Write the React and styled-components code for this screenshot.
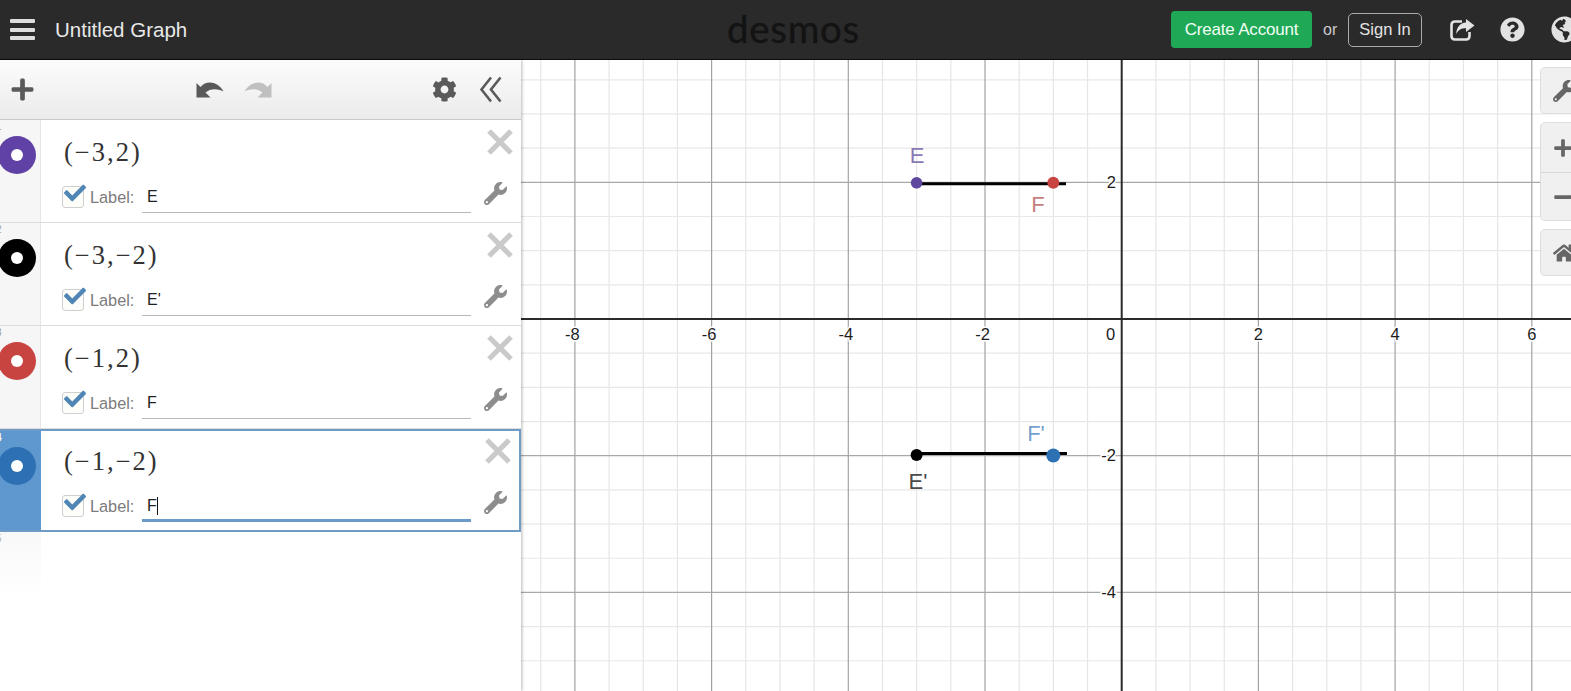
import React from "react";
import styled, { createGlobalStyle } from "styled-components";
import { FaCog, FaWrench, FaHome, FaPlus, FaMinus, FaQuestionCircle, FaGlobeAmericas, FaCheck } from "react-icons/fa";

const Global = createGlobalStyle`
  html, body { margin: 0; padding: 0; background: #fff; overflow: hidden; }
  * { box-sizing: border-box; }
  body { font-family: "Liberation Sans", Arial, sans-serif; }
`;

const Page = styled.div`
  width: 1571px; height: 691px; display: flex; flex-direction: column; overflow: hidden;
`;
const Header = styled.header`
  height: 60px; flex: none; display: flex; align-items: center; background: #2a2a2a;
  border-bottom: 1px solid #0c0c0c; color: #eee; overflow: hidden; padding-left: 10px;
`;
const Burger = styled.div`
  width: 25px; height: 21px; display: flex; flex-direction: column; justify-content: space-between; flex: none;
`;
const BurgerBar = styled.span`
  height: 4px; background: #ddd; border-radius: 1px;
`;
const Title = styled.div`
  margin-left: 20px; width: 672px; flex: none; font-size: 20.5px; color: #e8e8e8;
`;
const Logo = styled.div`
  width: 444px; flex: none; font-family: Lato, sans-serif; font-size: 38.5px; line-height: 54px; height: 58px; color: #131313; letter-spacing: 0.7px;
  -webkit-text-stroke: 0.4px #131313;
`;
const CreateButton = styled.div`
  width: 141px; height: 37px; flex: none; background: #1fa855; border-radius: 4px; color: #f2fff6;
  font-size: 17px; display: flex; align-items: center; justify-content: center; letter-spacing: -0.2px;
`;
const OrText = styled.span`
  margin-left: 11px; width: 25px; flex: none; font-size: 16px; color: #ccc;
`;
const SignIn = styled.div`
  width: 74px; height: 34px; flex: none; border: 1px solid #aaa; border-radius: 5px; color: #e4e4e4;
  font-size: 16.5px; display: flex; align-items: center; justify-content: center;
`;
const HeadIcon = styled.div`
  flex: none; margin-left: ${(p) => p.$gap}px; display: flex; color: #e2e2e2; font-size: ${(p) => p.$size}px;
`;
const Main = styled.div`
  flex: 1; display: flex; min-height: 0;
`;
const Sidebar = styled.aside`
  width: 521px; flex: none; display: flex; flex-direction: column; background: #fff;
  box-shadow: 1px 0 3px rgba(0,0,0,.28); position: relative; z-index: 2;
`;
const Toolbar = styled.div`
  height: 60px; flex: none; display: flex; align-items: center; padding-left: 10px;
  background: linear-gradient(#fcfcfc, #ebebeb); border-bottom: 1px solid #c8c8c8; color: #5a5a5a;
`;
const ToolIcon = styled.div`
  display: flex; flex: none; margin-left: ${(p) => p.$gap}px; color: ${(p) => p.$color || "#5a5a5a"}; font-size: ${(p) => p.$size}px;
`;
const Row = styled.div`
  height: 103px; flex: none; display: flex; border: ${(p) => (p.$active ? "2px solid #6f9cc6" : "0")};
  border-left: 0; border-bottom: ${(p) => (p.$active ? "2px solid #6f9cc6" : "1px solid #dcdcdc")};
`;
const Gutter = styled.div`
  width: 41px; flex: none; overflow: hidden; background: ${(p) => (p.$active ? "#5f98cf" : "#f6f6f6")};
  border-right: 1px solid ${(p) => (p.$active ? "#5f98cf" : "#e6e6e6")};
  color: ${(p) => (p.$active ? "#fff" : "#999")};
`;
const RowNumber = styled.div`
  font-size: 10px; line-height: 12px; height: 12px; margin: 1px 0 0 -4px; font-weight: ${(p) => (p.$active ? 700 : 400)};
`;
const Swatch = styled.div`
  width: 38px; height: 38px; border-radius: 50%; margin: ${(p) => (p.$active ? 4 : 3)}px 0 0 -2px;
  background: ${(p) => p.$color}; display: flex; align-items: center; justify-content: center;
`;
const SwatchDot = styled.span`
  width: 12px; height: 12px; background: #fff; border-radius: 50%;
`;
const RowBody = styled.div`
  flex: 1; display: flex; flex-direction: column; padding: ${(p) => (p.$active ? 17 : 19)}px 0 0 23px; min-width: 0;
`;
const TopLine = styled.div`
  display: flex; align-items: flex-start; justify-content: space-between; height: 47px;
`;
const MathText = styled.div`
  font-family: "Liberation Serif", "DejaVu Serif", serif; font-size: 26.5px; line-height: 30px; letter-spacing: 2px; color: #333; margin-top: -2px;
`;
const CloseBtn = styled.div`
  display: flex; color: #cacaca; margin: -10px 8px 0 0;
`;
const LabelLine = styled.div`
  display: flex; align-items: flex-start; height: 30px; margin-left: -2px;
`;
const Check = styled.div`
  width: 22px; height: 22px; flex: none; border: 1px solid #cfcfcf; border-radius: 3px; background: #fdfdf9;
  position: relative; color: #4f86b5;
`;
const CheckMark = styled.span`
  position: absolute; left: 1px; top: -5px; display: flex; font-size: 22px;
`;
const LabelText = styled.span`
  margin: 2px 0 0 6px; font-size: 16.3px; line-height: 18px; color: #7c7c7c; width: 52px; flex: none;
`;
const Input = styled.div`
  width: 329px; height: 27px; flex: none; margin-left: 0; padding: 2px 0 0 5px; font-size: 16px; line-height: 18px; color: #222;
  border-bottom: ${(p) => (p.$active ? "3px solid #6a9ac8" : "1px solid #b8b8b8")};
`;
const Caret = styled.span`
  display: inline-block; width: 1px; height: 18px; background: #111; vertical-align: top;
`;
const WrenchBtn = styled.div`
  margin: -4px 0 0 13px; display: flex; color: #8d8d8d; font-size: 23px;
`;
const EmptyRow = styled.div`
  height: 64px; width: 41px; flex: none; background: linear-gradient(#f8f8f8, #ffffff); color: #b5b5b5;
`;
const GraphArea = styled.div`
  flex: 1; position: relative; overflow: hidden; background: #fff;
`;
const GraphSvg = styled.svg`
  display: block; width: 1050px; height: 631px;
`;
const Controls = styled.div`
  position: absolute; left: 1019px; top: 7px; display: flex; flex-direction: column; gap: 8px; width: 52px;
`;
const ControlGroup = styled.div`
  background: #f0f0f0; border: 1px solid #dedede; border-radius: 5px; display: flex; flex-direction: column;
`;
const ControlBtn = styled.div`
  height: ${(p) => p.$h}px; display: flex; align-items: center; padding-left: 12px; color: #666; font-size: ${(p) => p.$size || 20}px;
  & + & { border-top: 1px solid #d8d8d8; }
`;

const ox = 1121.7, oy = 319, u = 68.35;
const range = (a, b) => Array.from({ length: b - a + 1 }, (_, i) => a + i);
const xsMinor = range(-18, 11).map((i) => i / 2);
const ysMinor = range(-11, 8).map((i) => i / 2);
const Halo = { paintOrder: "stroke", stroke: "#fff", strokeWidth: 3 };

function Graph() {
  const px = (x) => ox + x * u;
  const py = (y) => oy - y * u;
  return (
    <GraphSvg viewBox="521 60 1050 631">
      {xsMinor.filter((x) => x % 2 !== 0).map((x) => (
        <line key={"x" + x} x1={px(x)} x2={px(x)} y1="60" y2="691" stroke="#e6e6e6" strokeWidth="1.2" />
      ))}
      {ysMinor.filter((y) => y % 2 !== 0).map((y) => (
        <line key={"y" + y} y1={py(y)} y2={py(y)} x1="521" x2="1571" stroke="#e8e8e8" strokeWidth="1.2" />
      ))}
      {[-8, -6, -4, -2, 2, 4, 6].map((x) => (
        <line key={x} x1={px(x)} x2={px(x)} y1="60" y2="691" stroke="#a2a2a2" strokeWidth="1.2" />
      ))}
      {[-4, -2, 2].map((y) => (
        <line key={y} y1={py(y)} y2={py(y)} x1="521" x2="1571" stroke="#a8a8a8" strokeWidth="1.3" />
      ))}
      <line x1={ox} x2={ox} y1="60" y2="691" stroke="#2a2a2a" strokeWidth="2" />
      <line y1={oy} y2={oy} x1="521" x2="1571" stroke="#2a2a2a" strokeWidth="2" />

      <g fontFamily="'Liberation Sans', sans-serif" fontSize="16.5" fill="#1c1c1c" style={Halo}>
        {[-8, -6, -4, -2, 2, 4, 6].map((x) => (
          <text key={x} x={px(x) - (x < 0 ? 2.5 : 0)} y="340" textAnchor="middle">{x}</text>
        ))}
        <text x="1110.5" y="340" textAnchor="middle">0</text>
        <text x="1116" y="188" textAnchor="end">2</text>
        <text x="1116" y="461" textAnchor="end">-2</text>
        <text x="1116" y="598" textAnchor="end">-4</text>
      </g>

      <line x1="916.6" x2="1066" y1="183.7" y2="183.7" stroke="#000" strokeWidth="3" />
      <line x1="916.6" x2="1067" y1="453.6" y2="453.6" stroke="#000" strokeWidth="3" />
      <circle cx="916.6" cy="182.8" r="5.8" fill="#5f47a0" />
      <circle cx="1053.3" cy="182.8" r="6" fill="#c74440" />
      <circle cx="916.6" cy="455" r="6" fill="#000" />
      <circle cx="1053.3" cy="455.5" r="7" fill="#2d70b3" />

      <g fontFamily="'Liberation Sans', sans-serif" fontSize="22">
        <text x="917" y="163" textAnchor="middle" fill="#8a7ab4">E</text>
        <text x="1038" y="212" textAnchor="middle" fill="#c67f7d">F</text>
        <text x="1036" y="441" textAnchor="middle" fill="#74a2cc">F'</text>
        <text x="918" y="489" textAnchor="middle" fill="#4a4a4a">E'</text>
      </g>
    </GraphSvg>
  );
}

const UndoIcon = ({ flip }) => (
  <svg width="28" height="19" viewBox="0 0 28 19" style={flip ? { transform: "scaleX(-1)" } : undefined}>
    <path d="M0.5 3 L0.5 17.5 L14.5 17.5 L9.5 12.5 C14 8.5 21 8 27.5 11.5 C22 2 11 -0.5 4.5 7 Z" fill="currentColor" />
  </svg>
);
const ChevronsIcon = () => (
  <svg width="23" height="27" viewBox="0 0 23 27" fill="none" stroke="currentColor" strokeWidth="2.6">
    <path d="M12 1.5 L2.5 13.5 L12 25.5" />
    <path d="M21.5 1.5 L12 13.5 L21.5 25.5" />
  </svg>
);
const CloseIcon = () => (
  <svg width="26" height="26" viewBox="0 0 26 26" stroke="currentColor" strokeWidth="5.2">
    <path d="M2 2 L24 24 M24 2 L2 24" />
  </svg>
);
const ShareIcon = () => (
  <svg width="25" height="22" viewBox="0 0 25 22">
    <path d="M12 2.5 H5 Q1.5 2.5 1.5 6 V17 Q1.5 20.5 5 20.5 H16 Q19.5 20.5 19.5 17 V13" fill="none" stroke="currentColor" strokeWidth="2.6" />
    <path d="M16 0 L24.5 6.5 L16 13 V9.3 C11.5 9.3 8.5 10.5 6.2 15 C6.5 8.5 10 4 16 3.6 Z" fill="currentColor" />
  </svg>
);

const rows = [
  { n: 1, color: "#6042a6", math: "(−3,2)", label: "E" },
  { n: 2, color: "#000000", math: "(−3,−2)", label: "E'" },
  { n: 3, color: "#c74440", math: "(−1,2)", label: "F" },
  { n: 4, color: "#2d70b3", math: "(−1,−2)", label: "F", active: true },
];

export default function App() {
  return (
    <Page>
      <Global />
      <Header>
        <Burger><BurgerBar /><BurgerBar /><BurgerBar /></Burger>
        <Title>Untitled Graph</Title>
        <Logo>desmos</Logo>
        <CreateButton>Create Account</CreateButton>
        <OrText>or</OrText>
        <SignIn>Sign In</SignIn>
        <HeadIcon $gap={28} $size={25}><ShareIcon /></HeadIcon>
        <HeadIcon $gap={25} $size={25}><FaQuestionCircle /></HeadIcon>
        <HeadIcon $gap={26} $size={27}><FaGlobeAmericas /></HeadIcon>
      </Header>
      <Main>
        <Sidebar>
          <Toolbar>
            <ToolIcon $gap={0} $size={25}><FaPlus /></ToolIcon>
            <ToolIcon $gap={161}><UndoIcon /></ToolIcon>
            <ToolIcon $gap={20} $color="#c0c0c0"><UndoIcon flip /></ToolIcon>
            <ToolIcon $gap={160} $size={25}><FaCog /></ToolIcon>
            <ToolIcon $gap={22}><ChevronsIcon /></ToolIcon>
          </Toolbar>
          {rows.map((r) => (
            <Row key={r.n} $active={r.active}>
              <Gutter $active={r.active}>
                <RowNumber $active={r.active}>{r.n}</RowNumber>
                <Swatch $color={r.color}><SwatchDot /></Swatch>
              </Gutter>
              <RowBody $active={r.active}>
                <TopLine>
                  <MathText>{r.math}</MathText>
                  <CloseBtn><CloseIcon /></CloseBtn>
                </TopLine>
                <LabelLine>
                  <Check><CheckMark><FaCheck /></CheckMark></Check>
                  <LabelText>Label:</LabelText>
                  <Input $active={r.active}>{r.label}{r.active && <Caret />}</Input>
                  <WrenchBtn><FaWrench /></WrenchBtn>
                </LabelLine>
              </RowBody>
            </Row>
          ))}
          <EmptyRow><RowNumber>5</RowNumber></EmptyRow>
        </Sidebar>
        <GraphArea>
          <Graph />
          <Controls>
            <ControlGroup><ControlBtn $h={45} $size={22}><FaWrench /></ControlBtn></ControlGroup>
            <ControlGroup>
              <ControlBtn $h={49}><FaPlus /></ControlBtn>
              <ControlBtn $h={48}><FaMinus /></ControlBtn>
            </ControlGroup>
            <ControlGroup><ControlBtn $h={45} $size={22}><FaHome /></ControlBtn></ControlGroup>
          </Controls>
        </GraphArea>
      </Main>
    </Page>
  );
}
